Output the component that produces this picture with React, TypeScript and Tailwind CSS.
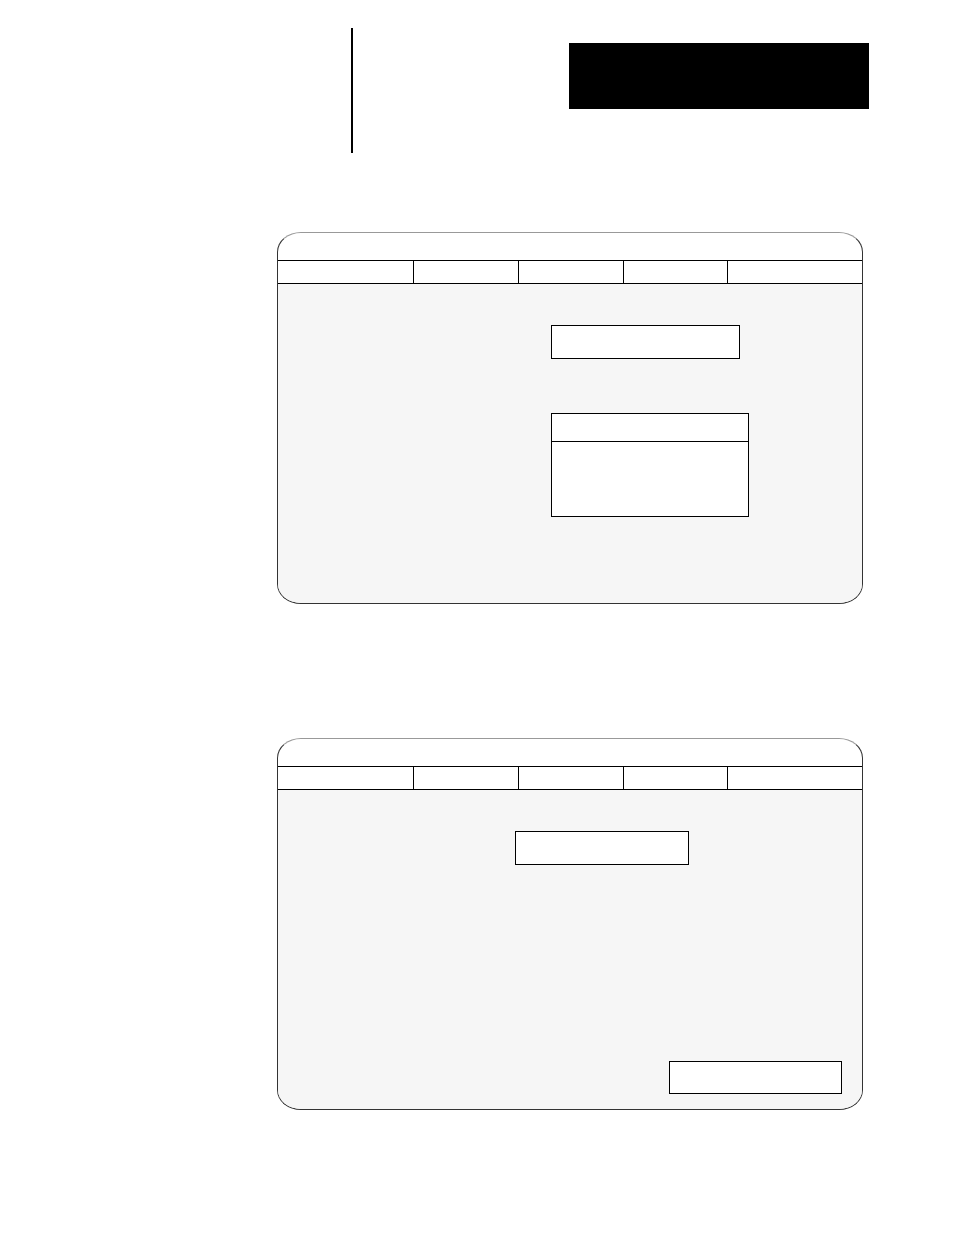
import React from 'react';

const Panel = ({ height, children }: { height: string; children: React.ReactNode }) => (
  <div
    className={`ml-[277px] w-[586px] ${height} flex flex-col overflow-hidden rounded-[24px/20px] border border-[#333] border-t-[#999] bg-white`}
  >
    <div className="h-[27px] shrink-0" />
    <div className="grid h-[24px] shrink-0 grid-cols-[136px_105px_105px_104px_1fr] border-y border-black">
      <div className="border-r border-black" />
      <div className="border-r border-black" />
      <div className="border-r border-black" />
      <div className="border-r border-black" />
      <div />
    </div>
    <div className="flex flex-1 flex-col bg-[#f6f6f6]">{children}</div>
  </div>
);

export default function App() {
  return (
    <div className="min-h-[1235px] w-[954px] bg-white">
      <div className="flex pt-[28px]">
        <div className="ml-[351px] h-[125px] w-[2px] bg-black" />
        <div className="ml-[216px] mt-[15px] h-[66px] w-[300px] bg-black" />
      </div>

      <div className="mt-[79px]">
        <Panel height="h-[372px]">
          <div className="ml-[273px] mt-[41px] h-[34px] w-[189px] border border-black bg-white" />
          <div className="ml-[273px] mt-[54px] flex h-[104px] w-[198px] flex-col border border-black bg-white">
            <div className="h-[28px] border-b border-black" />
          </div>
        </Panel>
      </div>

      <div className="mt-[134px]">
        <Panel height="h-[372px]">
          <div className="ml-[237px] mt-[41px] h-[34px] w-[174px] border border-black bg-white" />
          <div className="mt-auto mb-[15px] mr-[20px] flex justify-end">
            <div className="h-[33px] w-[173px] border border-black bg-white" />
          </div>
        </Panel>
      </div>
    </div>
  );
}
